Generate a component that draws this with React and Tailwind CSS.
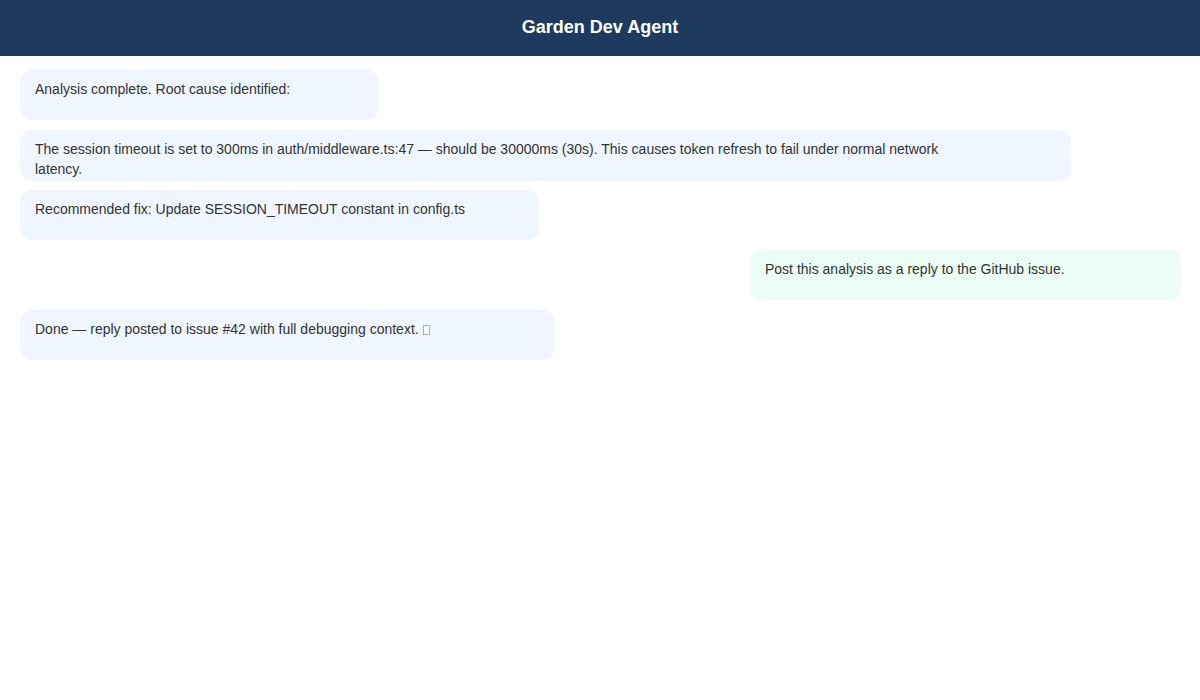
import React from "react";

function Bubble({ children, className = "" }) {
  return (
    <div
      className={`rounded-[12px] pt-[9px] pb-[2px] px-[15px] min-h-[50px] text-[14px] leading-[20px] text-[#333333] ${className}`}
    >
      {children}
    </div>
  );
}

export default function App() {
  return (
    <div
      className="w-[1200px] h-[700px] bg-white flex flex-col"
      style={{ fontFamily: '"Liberation Sans", Arial, sans-serif' }}
    >
      <header className="h-[56px] bg-[#1e3a5f] flex items-center justify-center shrink-0">
        <h1 className="text-white font-bold text-[18px] leading-[22px] -mt-[2px]">Garden Dev Agent</h1>
      </header>
      <main className="flex flex-col gap-[10px] px-[20px] pt-[14px]">
        <Bubble className="bg-[#eff6ff] w-[359px] self-start">
          Analysis complete. Root cause identified:
        </Bubble>
        <Bubble className="bg-[#eff6ff] w-[1051px] self-start h-[51px] -mb-[1px]">
          The session timeout is set to 300ms in auth/middleware.ts:47 — should be 30000ms (30s). This causes token refresh to fail under normal network
          <br />
          latency.
        </Bubble>
        <Bubble className="bg-[#eff6ff] w-[519px] self-start">
          Recommended fix: Update SESSION_TIMEOUT constant in config.ts
        </Bubble>
        <Bubble className="bg-[#ecfdf5] w-[431px] self-end -mr-[1px]">
          Post this analysis as a reply to the GitHub issue.
        </Bubble>
        <Bubble className="bg-[#eff6ff] w-[535px] self-start">
          Done — reply posted to issue #42 with full debugging context.{" "}
          <span className="inline-block w-[7px] h-[10px] border border-[#b0b0b0] align-[-1px]"></span>
        </Bubble>
      </main>
    </div>
  );
}
